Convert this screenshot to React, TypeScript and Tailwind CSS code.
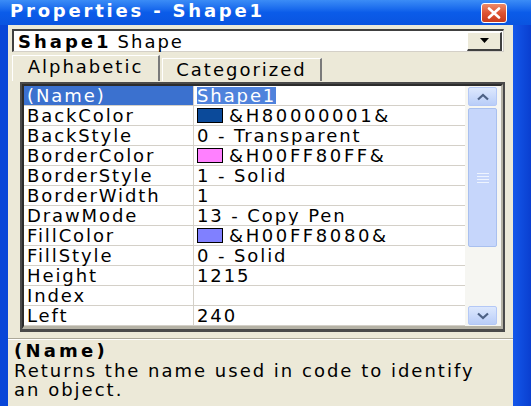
import { Fragment } from 'react'

interface Prop {
  name: string
  value: string
  swatch?: string
}

const props: Prop[] = [
  { name: '(Name)', value: 'Shape1' },
  { name: 'BackColor', value: '&H80000001&', swatch: '#0b4a9a' },
  { name: 'BackStyle', value: '0 - Transparent' },
  { name: 'BorderColor', value: '&H00FF80FF&', swatch: '#ff80ff' },
  { name: 'BorderStyle', value: '1 - Solid' },
  { name: 'BorderWidth', value: '1' },
  { name: 'DrawMode', value: '13 - Copy Pen' },
  { name: 'FillColor', value: '&H00FF8080&', swatch: '#8080ff' },
  { name: 'FillStyle', value: '0 - Solid' },
  { name: 'Height', value: '1215' },
  { name: 'Index', value: '' },
  { name: 'Left', value: '240' },
]

function ScrollArrow({ up }: { up?: boolean }) {
  return (
    <svg width="14" height="8" viewBox="0 0 14 8">
      <path
        d={up ? 'M2 6.5 L7 2 L12 6.5' : 'M2 1.5 L7 6 L12 1.5'}
        fill="none"
        stroke="#4d6185"
        strokeWidth="2.2"
      />
    </svg>
  )
}

export default function App() {
  return (
    <div className="w-[531px] h-[406px] flex flex-col overflow-hidden bg-[#0b4be2] text-black font-['DejaVu_Sans',sans-serif] text-[18px]">
      {/* title bar */}
      <div className="h-[25px] shrink-0 flex items-start justify-between pl-[10px] pr-[24px] bg-linear-to-b from-[#3b8cf6] via-[#0b5ce9] to-[#0a54e0]">
        <span className="pt-[1px] leading-[19px] font-bold tracking-[2.8px] text-white">Properties - Shape1</span>
        <div className="mt-[3px] w-[26px] h-[20px] rounded-[3px] border border-white flex items-center justify-center bg-linear-to-b from-[#ec8a68] via-[#de5332] to-[#c83b1e]">
          <svg width="14" height="12" viewBox="0 0 14 12">
            <path d="M2 1.5 L12 10.5 M12 1.5 L2 10.5" stroke="white" strokeWidth="2.6" strokeLinecap="round" />
          </svg>
        </div>
      </div>

      <div className="flex flex-1 min-h-0">
        <div className="w-[8px] shrink-0 bg-[#0846d8]" />

        <div className="flex-1 min-w-0 flex flex-col bg-[#ece9d8] pt-[4px]">
          {/* object combo */}
          <div className="ml-[4px] mr-[9px] h-[23px] flex items-center bg-white border-t-2 border-l-2 border-[#404040] border-r border-b border-r-[#d4d0c8] border-b-[#d4d0c8]">
            <span className="pl-[4px] leading-[19px] font-bold tracking-[3px]">Shape1</span>
            <span className="pl-[6px] leading-[19px] tracking-[2px]">Shape</span>
            <div className="ml-auto mr-[1px] w-[35px] h-[19px] flex items-center justify-center bg-[#ece9d8] border-t border-l border-white border-r-2 border-b-2 border-r-[#404040] border-b-[#404040]">
              <svg width="9" height="5" viewBox="0 0 9 5">
                <path d="M0 0 H9 L4.5 5 Z" fill="black" />
              </svg>
            </div>
          </div>

          {/* tabs */}
          <div className="mt-[3px] h-[26px] flex items-start pl-[4px]">
            <div className="w-[148px] h-[26px] flex justify-center pt-[1px] leading-[19px] tracking-[2px] border-t border-l border-white border-r-2 border-r-[#7a7a7a]">
              Alphabetic
            </div>
            <div className="ml-[2px] mt-[3px] w-[160px] h-[23px] flex justify-center pt-[1px] leading-[19px] tracking-[2px] border-t border-l border-white border-r-2 border-r-[#7a7a7a]">
              Categorized
            </div>
          </div>

          {/* property grid */}
          <div className="mt-[1px] ml-[12px] mr-[8px] border-2 border-[#4a4a4a] border-b-[3px]">
            <div className="flex border-2 border-t-[#2c2c2c] border-l-[#2c2c2c] border-r-[#b5b2a5] border-b-[#b5b2a5] border-b-[3px] bg-white">
              <div className="flex-1 min-w-0 grid grid-cols-[170px_1fr]">
                {props.map((p, i) => (
                  <Fragment key={p.name}>
                    <div
                      className={`h-[20px] pl-[3px] flex items-center leading-[19px] tracking-[1.9px] whitespace-nowrap border-r border-b border-[#d4d0c8] ${
                        i === 0 ? 'bg-[#3b71cf] text-white' : ''
                      }`}
                    >
                      {p.name}
                    </div>
                    <div className="h-[20px] pl-[3px] flex items-center leading-[19px] tracking-[1.9px] whitespace-nowrap overflow-hidden border-b border-[#d4d0c8]">
                      {i === 0 ? (
                        <span className="bg-[#4f82dc] text-white leading-[17px]">{p.value}</span>
                      ) : p.swatch ? (
                        <>
                          <span className="w-[26px] h-[15px] border border-black shrink-0" style={{ background: p.swatch }} />
                          <span className="pl-[6px] tracking-[2.6px]">{p.value}</span>
                        </>
                      ) : (
                        p.value
                      )}
                    </div>
                  </Fragment>
                ))}
              </div>

              {/* scrollbar */}
              <div className="w-[36px] shrink-0 flex flex-col pl-[3px] pr-[4px] py-[1px] bg-[#f6f6f2]">
                <div className="h-[19px] flex items-center justify-center rounded-[2px] border border-[#b4c8f6] bg-linear-to-b from-[#dde8fd] to-[#b9cdf8]">
                  <ScrollArrow up />
                </div>
                <div className="mt-[2px] h-[139px] flex flex-col items-center justify-center gap-[2px] rounded-[2px] border border-[#a9c0ef] bg-[#c6d6fb]">
                  <div className="w-[12px] h-[1px] bg-[#eef4fe]" />
                  <div className="w-[12px] h-[1px] bg-[#eef4fe]" />
                  <div className="w-[12px] h-[1px] bg-[#eef4fe]" />
                  <div className="w-[12px] h-[1px] bg-[#eef4fe]" />
                </div>
                <div className="flex-1" />
                <div className="h-[19px] flex items-center justify-center rounded-[2px] border border-[#b4c8f6] bg-linear-to-b from-[#dde8fd] to-[#b9cdf8]">
                  <ScrollArrow />
                </div>
              </div>
            </div>
          </div>

          {/* description */}
          <div className="mt-[6px] flex-1 border-t border-[#aca899]">
            <div className="border-t border-white px-[6px] pt-[1px] flex flex-col">
              <div className="leading-[20px] font-bold tracking-[3.2px]">(Name)</div>
              <p className="max-w-[490px] leading-[19px] tracking-[2px]">
                Returns the name used in code to identify an object.
              </p>
            </div>
          </div>
        </div>

        <div className="w-[18px] shrink-0 bg-linear-to-r from-[#1457ea] to-[#0a3fd0]" />
      </div>
    </div>
  )
}
